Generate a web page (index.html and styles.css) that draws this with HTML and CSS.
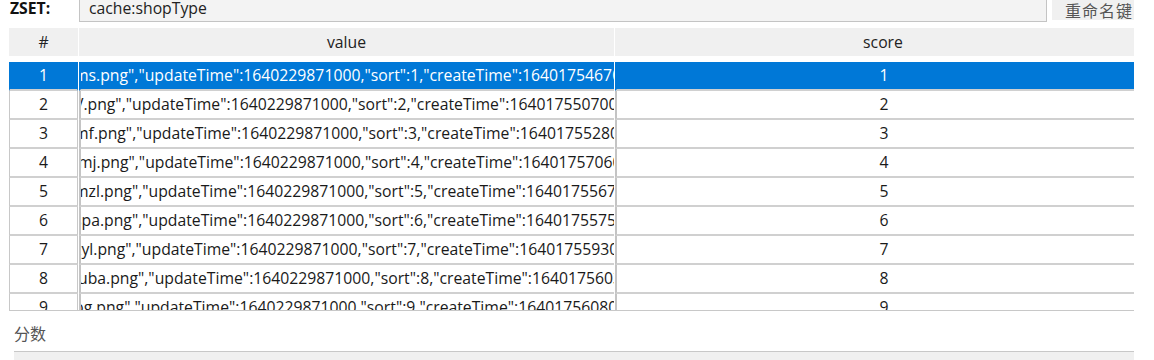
FILE: index.html
```html
<!DOCTYPE html>
<html lang="zh-CN">
<head>
    <meta charset="UTF-8">
    <title>ZSET cache:shopType</title>
    <link rel="stylesheet" href="styles.css">
</head>
<body>
<div class="toolbar">
    <span class="type-label">ZSET:</span>
    <div class="key-input">cache:shopType</div>
    <button class="rename">重命名键</button>
</div>

<div class="table">
    <div class="thead">
        <div>#</div>
        <div>value</div>
        <div>score</div>
    </div>
    <div class="tbody">
        <div class="row selected">
            <div class="idx">1</div>
            <div class="val"><span>ms.png","updateTime":1640229871000,"sort":1,"createTime":1640175467000}</span></div>
            <div class="score">1</div>
        </div>
        <div class="row">
            <div class="idx">2</div>
            <div class="val"><span>V.png","updateTime":1640229871000,"sort":2,"createTime":1640175507000}</span></div>
            <div class="score">2</div>
        </div>
        <div class="row">
            <div class="idx">3</div>
            <div class="val"><span>mf.png","updateTime":1640229871000,"sort":3,"createTime":1640175528000}</span></div>
            <div class="score">3</div>
        </div>
        <div class="row">
            <div class="idx">4</div>
            <div class="val"><span>jmj.png","updateTime":1640229871000,"sort":4,"createTime":1640175706000}</span></div>
            <div class="score">4</div>
        </div>
        <div class="row">
            <div class="idx">5</div>
            <div class="val"><span>mzl.png","updateTime":1640229871000,"sort":5,"createTime":1640175567000}</span></div>
            <div class="score">5</div>
        </div>
        <div class="row">
            <div class="idx">6</div>
            <div class="val"><span>spa.png","updateTime":1640229871000,"sort":6,"createTime":1640175575000}</span></div>
            <div class="score">6</div>
        </div>
        <div class="row">
            <div class="idx">7</div>
            <div class="val"><span>zyl.png","updateTime":1640229871000,"sort":7,"createTime":1640175593000}</span></div>
            <div class="score">7</div>
        </div>
        <div class="row">
            <div class="idx">8</div>
            <div class="val"><span>iuba.png","updateTime":1640229871000,"sort":8,"createTime":1640175603000}</span></div>
            <div class="score">8</div>
        </div>
        <div class="row">
            <div class="idx">9</div>
            <div class="val"><span>pg.png","updateTime":1640229871000,"sort":9,"createTime":1640175608000}</span></div>
            <div class="score">9</div>
        </div>
    </div>
</div>

<div class="field-label">分数</div>
<div class="score-input"></div>
</body>
</html>
```

FILE: styles.css
```css
* {
    box-sizing: border-box;
}

body {
    margin: 0;
    width: 1154px;
    height: 360px;
    overflow: hidden;
    background: #fff;
    color: #1a1a1a;
    font-family: "Open Sans", "Noto Sans CJK SC", sans-serif;
    font-size: 15.75px;
}

.toolbar {
    display: flex;
    align-items: flex-start;
    height: 22px;
    width: 1134px;
    overflow: hidden;
}

.type-label {
    width: 79px;
    padding-left: 10px;
    font-weight: 700;
    line-height: 17px;
    color: #111;
}

.key-input {
    width: 968px;
    height: 22px;
    padding-left: 9px;
    line-height: 17px;
    background: #f3f3f3;
    border: 1px solid #c4c4c4;
    border-top: none;
    color: #222;
}

.rename {
    flex: none;
    margin-left: 5px;
    width: 82px;
    height: 20px;
    padding: 0 0 0 13px;
    border: none;
    background: #f0f0f0;
    color: #555;
    text-align: left;
    white-space: nowrap;
    font-family: "Noto Sans CJK SC", sans-serif;
    font-size: 16px;
    letter-spacing: 1px;
    line-height: 17px;
}

.table {
    margin: 6px 0 0 9px;
    width: 1125px;
    overflow: hidden;
}

.thead,
.row {
    display: grid;
    grid-template-columns: 69px 535px 536px;
    column-gap: 1px;
}

.thead {
    height: 28px;
}

.thead div {
    display: flex;
    align-items: center;
    justify-content: center;
    background: #f0f0f0;
    color: #222;
}

.tbody {
    margin-top: 6px;
    height: 249px;
    overflow: hidden;
    border-bottom: 1px solid #c8c8c8;
}

.row {
    height: 29px;
}

.row > div {
    height: 29px;
    line-height: 27px;
    border-bottom: 2px solid #d0d0d0;
}

.idx {
    text-align: center;
    border-left: 1px solid #c8c8c8;
    border-right: 1px solid #c8c8c8;
}

.val {
    overflow: hidden;
    white-space: nowrap;
    border-left: 2px solid #c4c4c4;
}

.val span {
    display: block;
    margin-left: -7px;
}

.score {
    text-align: center;
    border-left: 2px solid #c4c4c4;
}

.row.selected > div {
    background: #0078d7;
    color: #fff;
    border-left-color: #0078d7;
    border-right-color: #0078d7;
}

.field-label {
    margin: 13px 0 0 14px;
    font-family: "Noto Sans CJK SC", sans-serif;
    font-size: 16px;
    line-height: 18px;
    color: #555;
}

.score-input {
    margin: 9px 0 0 14px;
    width: 1120px;
    height: 20px;
    background: #f0f0f0;
    border-top: 1px solid #c8c8c8;
}
```
